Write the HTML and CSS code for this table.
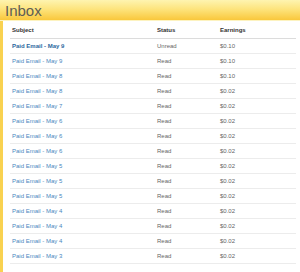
FILE: index.html
```html
<!DOCTYPE html>
<html lang="en">
<head>
    <meta charset="UTF-8">
    <title>Inbox</title>
    <link rel="stylesheet" href="styles.css">
</head>
<body>
    <header class="inbox-head">
        <h1>Inbox</h1>
    </header>
    <div class="inbox-panel">
        <table class="inbox-table">
            <thead>
                <tr>
                    <th class="col-subject">Subject</th>
                    <th class="col-status">Status</th>
                    <th>Earnings</th>
                </tr>
            </thead>
            <tbody>
                <tr class="unread"><td><a href="#">Paid Email - May 9</a></td><td>Unread</td><td>$0.10</td></tr>
                <tr><td><a href="#">Paid Email - May 9</a></td><td>Read</td><td>$0.10</td></tr>
                <tr><td><a href="#">Paid Email - May 8</a></td><td>Read</td><td>$0.10</td></tr>
                <tr><td><a href="#">Paid Email - May 8</a></td><td>Read</td><td>$0.02</td></tr>
                <tr><td><a href="#">Paid Email - May 7</a></td><td>Read</td><td>$0.02</td></tr>
                <tr><td><a href="#">Paid Email - May 6</a></td><td>Read</td><td>$0.02</td></tr>
                <tr><td><a href="#">Paid Email - May 6</a></td><td>Read</td><td>$0.02</td></tr>
                <tr><td><a href="#">Paid Email - May 6</a></td><td>Read</td><td>$0.02</td></tr>
                <tr><td><a href="#">Paid Email - May 5</a></td><td>Read</td><td>$0.02</td></tr>
                <tr><td><a href="#">Paid Email - May 5</a></td><td>Read</td><td>$0.02</td></tr>
                <tr><td><a href="#">Paid Email - May 5</a></td><td>Read</td><td>$0.02</td></tr>
                <tr><td><a href="#">Paid Email - May 4</a></td><td>Read</td><td>$0.02</td></tr>
                <tr><td><a href="#">Paid Email - May 4</a></td><td>Read</td><td>$0.02</td></tr>
                <tr><td><a href="#">Paid Email - May 4</a></td><td>Read</td><td>$0.02</td></tr>
                <tr><td><a href="#">Paid Email - May 3</a></td><td>Read</td><td>$0.02</td></tr>
            </tbody>
        </table>
    </div>
</body>
</html>
```
FILE: styles.css
```css
* {
    margin: 0;
    padding: 0;
    box-sizing: border-box;
}
body {
    font-family: 'Liberation Sans', Arial, sans-serif;
    background: #fff;
    color: #666;
}
.inbox-head {
    height: 21px;
    background: linear-gradient(#fef4b0, #fde47e 45%, #f9c83c);
    border-bottom: 1px solid #fdf3c0;
    padding-left: 5px;
}
.inbox-head h1 {
    font-size: 15px;
    font-weight: normal;
    color: #5e5e56;
    line-height: 21px;
}
.inbox-panel {
    border-left: 3px solid #f9d250;
    padding: 1px 4px 20px 7px;
}
.inbox-table {
    width: 100%;
    border-collapse: collapse;
    font-size: 6px;
}
.inbox-table th {
    text-align: left;
    font-weight: bold;
    color: #333;
    height: 16px;
    padding-left: 2px;
    border-bottom: 1px solid #dcdcdc;
}
.inbox-table td {
    height: 15px;
    padding-left: 2px;
    border-bottom: 1px solid #ececec;
}
.col-subject {
    width: 145px;
}
.col-status {
    width: 63px;
}
.inbox-table a {
    color: #4a87c0;
    text-decoration: none;
}
.unread a {
    color: #2c689e;
    font-weight: bold;
}
```
